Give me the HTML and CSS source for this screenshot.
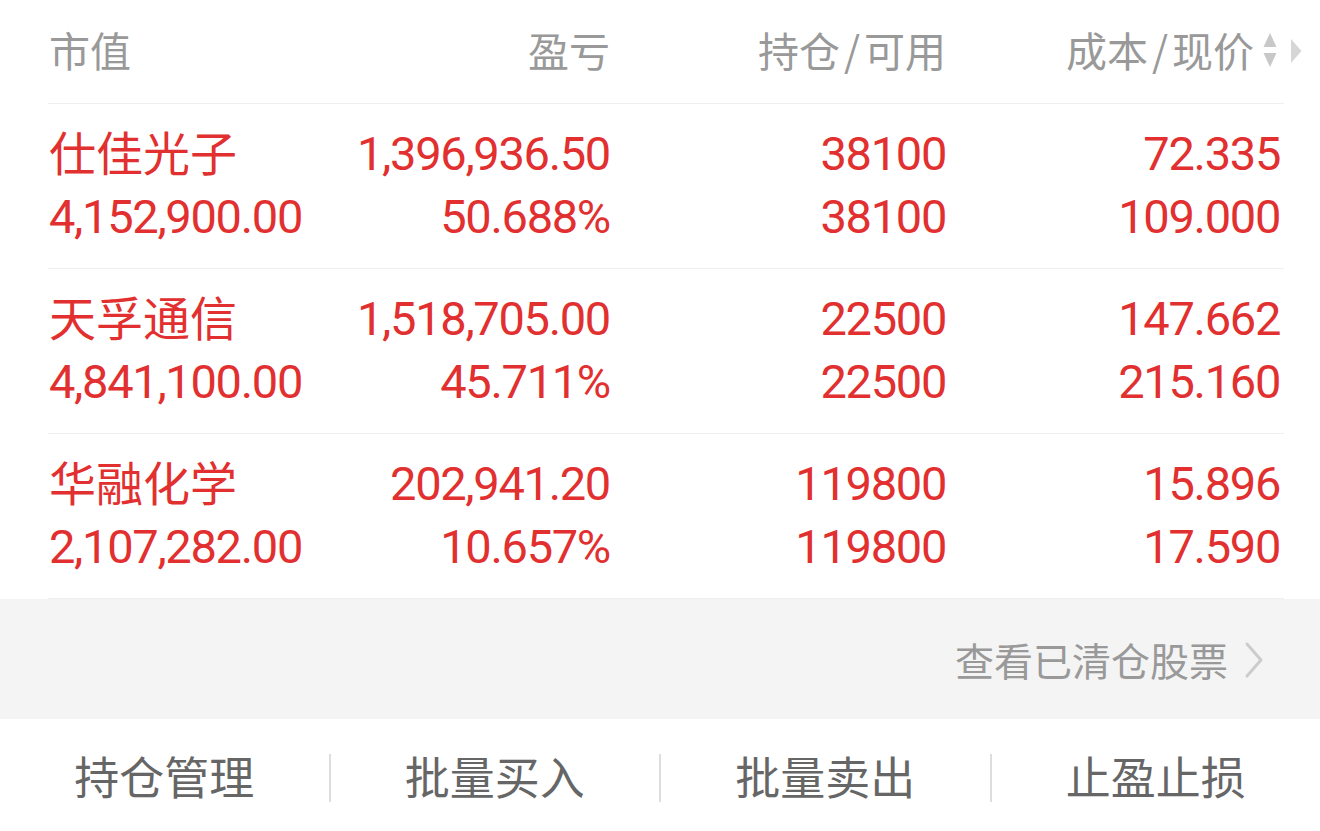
FILE: index.html
```html
<!DOCTYPE html>
<html lang="zh-CN">
<head>
<meta charset="utf-8">
<title>持仓</title>
<link rel="stylesheet" href="styles.css">
</head>
<body>
<div class="page">
  <div class="table">
    <div class="head">
      <div class="hcell left">市值</div>
      <div class="hcell">盈亏</div>
      <div class="hcell">持仓<span class="slash">/</span>可用</div>
      <div class="hcell sortcell">成本<span class="slash">/</span>现价
        <svg class="sort" width="14" height="38" viewBox="0 0 14 38"><polygon points="7,1 13.5,15 0.5,15" fill="#c8c8c8"/><polygon points="0.5,21 13.5,21 7,35" fill="#c8c8c8"/></svg>
        <svg class="more" width="12" height="26" viewBox="0 0 12 26"><polygon points="1,1 11.5,13 1,25" fill="#d6d6d6"/></svg>
      </div>
    </div>

    <div class="row">
      <div class="cell left"><div class="name">仕佳光子</div><div class="num">4,152,900.00</div></div>
      <div class="cell"><div class="num">1,396,936.50</div><div class="num">50.688%</div></div>
      <div class="cell"><div class="num">38100</div><div class="num">38100</div></div>
      <div class="cell"><div class="num">72.335</div><div class="num">109.000</div></div>
    </div>

    <div class="row">
      <div class="cell left"><div class="name">天孚通信</div><div class="num">4,841,100.00</div></div>
      <div class="cell"><div class="num">1,518,705.00</div><div class="num">45.711%</div></div>
      <div class="cell"><div class="num">22500</div><div class="num">22500</div></div>
      <div class="cell"><div class="num">147.662</div><div class="num">215.160</div></div>
    </div>

    <div class="row">
      <div class="cell left"><div class="name">华融化学</div><div class="num">2,107,282.00</div></div>
      <div class="cell"><div class="num">202,941.20</div><div class="num">10.657%</div></div>
      <div class="cell"><div class="num">119800</div><div class="num">119800</div></div>
      <div class="cell"><div class="num">15.896</div><div class="num">17.590</div></div>
    </div>
  </div>

  <div class="cleared">
    <span class="cleared-text">查看已清仓股票</span>
    <svg class="chev" width="20" height="38" viewBox="0 0 20 38"><polyline points="3,3 17,19 3,35" fill="none" stroke="#cccccc" stroke-width="3" stroke-linecap="round" stroke-linejoin="round"/></svg>
  </div>

  <div class="actions">
    <div class="action">持仓管理</div>
    <div class="sep"></div>
    <div class="action">批量买入</div>
    <div class="sep"></div>
    <div class="action">批量卖出</div>
    <div class="sep"></div>
    <div class="action">止盈止损</div>
  </div>
</div>
</body>
</html>
```

FILE: styles.css
```css
html, body {
  margin: 0;
  padding: 0;
  background: #ffffff;
}

.page {
  width: 1320px;
  height: 831px;
  overflow: hidden;
  font-family: "Noto Sans CJK SC", "Noto Sans", sans-serif;
}

.table {
  margin: 0 36px 0 48px;
}

.head,
.row {
  display: grid;
  grid-template-columns: 280px 282px 336px 334px;
  padding-right: 4px;
  border-bottom: 1px solid #efefef;
}

.head {
  height: 103px;
  align-items: center;
}

.hcell {
  text-align: right;
  font-size: 41px;
  color: #999999;
  line-height: 1;
  margin-top: -4px;
}

.slash {
  display: inline-block;
  margin: 0 4px;
}

.sortcell {
  display: flex;
  justify-content: flex-end;
  align-items: center;
  margin-right: -22px;
}

.sort {
  margin-left: 9px;
  margin-top: 2px;
}

.more {
  margin-left: 13px;
  margin-top: 2px;
}

.row {
  padding-top: 18px;
  padding-bottom: 20px;
  height: 126px;
  color: #e1302f;
}

.cell {
  text-align: right;
}

.hcell.left,
.cell.left {
  text-align: left;
  padding-left: 1px;
}

.name {
  font-size: 47px;
  line-height: 57px;
  height: 63px;
}

.num {
  font-family: "Roboto", "Liberation Sans", sans-serif;
  font-size: 47px;
  line-height: 63px;
  height: 63px;
  letter-spacing: -1.3px;
}

.cleared {
  height: 120px;
  background: #f4f4f4;
  display: flex;
  justify-content: flex-end;
  align-items: center;
  padding-right: 56px;
  gap: 16px;
}

.cleared-text {
  font-size: 39px;
  color: #999999;
  line-height: 1;
}

.chev {
  margin-top: 2px;
}

.actions {
  height: 112px;
  display: flex;
  align-items: center;
}

.action {
  flex: 1;
  text-align: center;
  font-size: 45px;
  color: #666666;
  line-height: 1;
}

.sep {
  width: 2px;
  height: 48px;
  margin-top: 6px;
  background: #dddddd;
}
```
